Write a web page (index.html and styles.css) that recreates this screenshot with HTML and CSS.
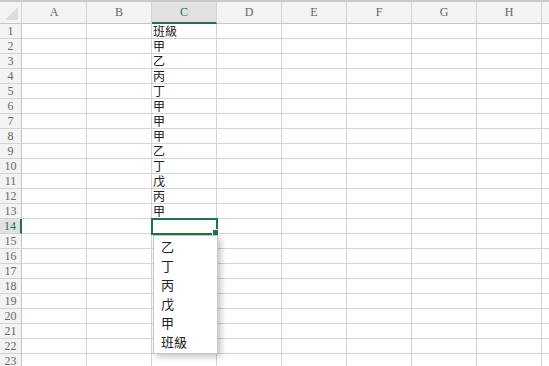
FILE: index.html
```html
<!DOCTYPE html>
<html lang="zh-TW">
<head>
    <meta charset="UTF-8">
    <title>班級</title>
    <link rel="stylesheet" href="styles.css">
</head>
<body>
    <div class="sheet">
        <div class="grid" id="grid"></div>
        <ul class="dropdown">
            <li>乙</li>
            <li>丁</li>
            <li>丙</li>
            <li>戊</li>
            <li>甲</li>
            <li>班級</li>
        </ul>
    </div>

    <script>
        const cols = ['A', 'B', 'C', 'D', 'E', 'F', 'G', 'H', ''];
        const colC = ['班級', '甲', '乙', '丙', '丁', '甲', '甲', '甲', '乙', '丁', '戊', '丙', '甲'];
        const activeRow = 14;
        const grid = document.getElementById('grid');

        function cell(cls, text) {
            const el = document.createElement('div');
            el.className = cls;
            if (text) el.textContent = text;
            grid.appendChild(el);
            return el;
        }

        cell('corner');
        cols.forEach(c => cell(c === 'C' ? 'col-head active' : 'col-head', c));

        for (let r = 1; r <= 23; r++) {
            cell(r === activeRow ? 'row-head active' : 'row-head', String(r));
            cols.forEach(c => {
                const text = c === 'C' ? colC[r - 1] : '';
                const el = cell('cell', text);
                if (c === 'C' && r === activeRow) el.classList.add('selected');
            });
        }
    </script>
</body>
</html>
```

FILE: styles.css
```css
body {
    margin: 0;
    background-color: white;
    overflow: hidden;
}

.sheet {
    position: relative;
    height: 366px;
    border-top: 2px solid #c9c9c9;
    box-sizing: border-box;
    overflow: hidden;
}

.grid {
    display: grid;
    grid-template-columns: 22px repeat(9, 65px);
    grid-template-rows: 22px;
    grid-auto-rows: 15px;
}

.corner,
.col-head,
.row-head {
    background-color: #f3f3f3;
    color: #666;
    font-family: "Liberation Serif", "DejaVu Serif", serif;
    box-sizing: border-box;
}

.corner {
    position: relative;
    border-right: 1px solid #d4d4d4;
    border-bottom: 1px solid #c6c6c6;
}

.corner::after {
    content: '';
    position: absolute;
    right: 3px;
    bottom: 3px;
    border-left: 13px solid transparent;
    border-bottom: 13px solid #dcdcdc;
}

.col-head {
    display: flex;
    align-items: center;
    justify-content: center;
    font-size: 12px;
    border-right: 1px solid #d4d4d4;
    border-bottom: 1px solid #c6c6c6;
}

.col-head.active {
    background-color: #e1e1e1;
    color: #217346;
    border-bottom: 2px solid #217346;
}

.row-head {
    display: flex;
    align-items: center;
    justify-content: center;
    font-size: 12px;
    line-height: 1;
    border-right: 1px solid #c6c6c6;
    border-bottom: 1px solid #d4d4d4;
}

.row-head.active {
    background-color: #e1e1e1;
    color: #217346;
    border-right: 2px solid #217346;
}

.cell {
    border-right: 1px solid #d4d4d4;
    border-bottom: 1px solid #d4d4d4;
    box-sizing: border-box;
    font-family: "Noto Sans CJK TC", "Noto Sans", sans-serif;
    font-size: 12px;
    line-height: 14px;
    color: #222;
    padding-left: 1px;
    white-space: nowrap;
}

.cell.selected {
    position: relative;
    outline: 2px solid #217346;
    outline-offset: -1px;
    z-index: 1;
}

.cell.selected::after {
    content: '';
    position: absolute;
    right: -3px;
    bottom: -3px;
    width: 5px;
    height: 5px;
    background-color: #217346;
    border: 1px solid white;
}

.dropdown {
    position: absolute;
    left: 153px;
    top: 233px;
    width: 65px;
    margin: 0;
    padding: 1px 0 2px;
    list-style: none;
    background-color: white;
    border: 1px solid #c6c6c6;
    box-sizing: border-box;
    box-shadow: 3px 3px 6px rgba(0, 0, 0, 0.22);
    z-index: 2;
}

.dropdown li {
    height: 19px;
    line-height: 19px;
    padding-left: 7px;
    font-family: "Noto Sans CJK TC", "Noto Sans", sans-serif;
    font-size: 13px;
    color: #222;
}
```
